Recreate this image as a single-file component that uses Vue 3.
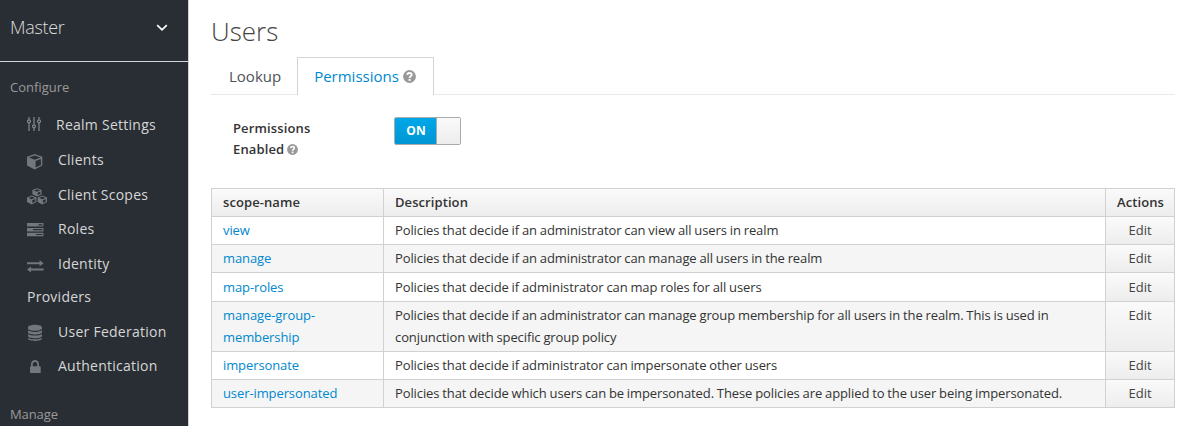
<script setup>
const menu = [
  { label: 'Realm Settings', icon: 'sliders', key: 'settings' },
  { label: 'Clients', icon: 'cube', key: 'clients' },
  { label: 'Client Scopes', icon: 'cubes', key: 'scopes' },
  { label: 'Roles', icon: 'tasks', key: 'roles' },
  { label: 'Identity', more: 'Providers', icon: 'exchange', key: 'identity' },
  { label: 'User Federation', icon: 'database', key: 'federation' },
  { label: 'Authentication', icon: 'lock', key: 'auth' },
]
const rows = [
  { name: ['view'], text: ['Policies that decide if an administrator can view all users in realm'] },
  { name: ['manage'], text: ['Policies that decide if an administrator can manage all users in the realm'] },
  { name: ['map-roles'], text: ['Policies that decide if administrator can map roles for all users'], size: 'tall' },
  {
    name: ['manage-group-', 'membership'],
    text: [
      'Policies that decide if an administrator can manage group membership for all users in the realm. This is used in',
      'conjunction with specific group policy',
    ],
    size: 'double',
  },
  { name: ['impersonate'], text: ['Policies that decide if administrator can impersonate other users'] },
  { name: ['user-impersonated'], text: ['Policies that decide which users can be impersonated. These policies are applied to the user being impersonated.'] },
]
</script>

<template>
  <div class="page">
    <aside class="sidebar">
      <div class="realm">
        <span>Master</span>
        <svg class="chevron" width="12" height="8" viewBox="0 0 12 8"><path d="M1.2 1.2 6 5.9l4.8-4.7" /></svg>
      </div>
      <h2 class="group">Configure</h2>
      <ul class="menu">
        <li v-for="m in menu" :key="m.key" :class="m.key">
          <a class="entry">
            <svg class="icon" width="20" height="19" viewBox="0 0 20 19">
              <g v-if="m.icon === 'sliders'" class="line">
                <path d="M2 1v2.6M2 7v8M7 1v7.6M7 12v3M12 1v2.6M12 7v8" />
                <circle cx="2" cy="5.3" r="1.5" /><circle cx="7" cy="10.3" r="1.5" /><circle cx="12" cy="5.3" r="1.5" />
              </g>
              <path v-else-if="m.icon === 'cube'" fill-rule="evenodd" d="M7.7 1 15.3 3.8V12.6L7.7 16.5 0 12.6V3.8ZM7.7 2.5 2 4.6 7.7 6.8 13.5 4.6ZM8.6 8.1V14.6L13.9 11.9V6.1Z" />
              <g v-else-if="m.icon === 'cubes'" fill-rule="evenodd">
                <path d="M10 .2 14.6 2V6.2L10 8.6 5.4 6.2V2ZM10 1.3 6.9 2.5 10 3.8 13.1 2.5ZM10.6 4.8V7.1L13.4 5.7V3.6Z" />
                <path d="M4.7 7.5 9.4 9.4V14L4.7 16.4 0 14V9.4ZM4.7 8.6 1.6 9.9 4.7 11.2 7.8 9.9ZM5.3 12.2V15L8.2 13.5V11Z" />
                <path d="M15.3 7.5 20 9.4V14L15.3 16.4 10.6 14V9.4ZM15.3 8.6 12.2 9.9 15.3 11.2 18.4 9.9ZM15.9 12.2V15L18.8 13.5V11Z" />
              </g>
              <path v-else-if="m.icon === 'tasks'" fill-rule="evenodd" d="M0 1H16.4V4.6H0ZM11.5 2.2V3.4H15.3V2.2ZM0 6H16.4V9.4H0ZM6 7.1V8.2H15.3V7.1ZM0 10.8H16.4V14.2H0ZM9 11.9V13.1H15.3V11.9Z" />
              <path v-else-if="m.icon === 'exchange'" d="M0 4.3H12.6V2.3L16.6 5.3 12.6 8.3V6.3H0ZM16.6 10.5H4V8.5L0 11.5 4 14.5V12.5H16.6Z" />
              <g v-else-if="m.icon === 'database'">
                <path d="M1 3.4C1 -.2 15 -.2 15 3.4V4.5C15 7.5 1 7.5 1 4.5Z" />
                <path d="M1 6.3C3.5 8.4 12.5 8.4 15 6.3V8.2C15 11.2 1 11.2 1 8.2Z" />
                <path d="M1 10C3.5 12.1 12.5 12.1 15 10V11.9C15 14.9 1 14.9 1 11.9Z" />
                <path d="M1 13.7C3.5 15.8 12.5 15.8 15 13.7V14.6C15 17.8 1 17.8 1 14.6Z" />
              </g>
              <path v-else fill-rule="evenodd" d="M4 7.2V5.2C4 -.3 12 -.3 12 5.2V7.2H12.4Q13.7 7.2 13.7 8V14H3V8Q3 7.2 4 7.2ZM5.8 7.2H10.2V5.3C10.2 2.2 5.8 2.2 5.8 5.3Z" />
            </svg>
            <span class="label">{{ m.label }}</span>
          </a>
          <div v-if="m.more" class="more">{{ m.more }}</div>
        </li>
      </ul>
      <h2 class="group manage">Manage</h2>
    </aside>

    <main class="content">
      <h1>Users</h1>
      <nav class="tabs">
        <a class="tab">Lookup</a>
        <a class="tab active">
          <span>Permissions</span>
          <svg class="help" width="13" height="13" viewBox="0 0 13 13"><circle cx="6.5" cy="6.5" r="6.4" /><path d="M4.3 4.9C4.4 2.5 8.6 2.3 8.7 4.8 8.7 6.4 6.6 6.3 6.6 8" /><rect x="5.6" y="9" width="2" height="1.9" /></svg>
        </a>
      </nav>
      <div class="field">
        <label>Permissions<br><span class="second">Enabled <svg class="help" width="11" height="11" viewBox="0 0 13 13"><circle cx="6.5" cy="6.5" r="6.4" /><path d="M4.3 4.9C4.4 2.5 8.6 2.3 8.7 4.8 8.7 6.4 6.6 6.3 6.6 8" /><rect x="5.6" y="9" width="2" height="1.9" /></svg></span></label>
        <div class="switch"><span class="on">ON</span><span class="knob"></span></div>
      </div>
      <table>
        <colgroup><col class="c1"><col class="c2"><col class="c3"></colgroup>
        <thead>
          <tr><th>scope-name</th><th>Description</th><th>Actions</th></tr>
        </thead>
        <tbody>
          <tr v-for="r in rows" :key="r.name[0]" :class="r.size">
            <td><a><div v-for="n in r.name" :key="n">{{ n }}</div></a></td>
            <td><div v-for="t in r.text" :key="t">{{ t }}</div></td>
            <td class="edit">Edit</td>
          </tr>
        </tbody>
      </table>
    </main>
  </div>
</template>

<style>
body { margin: 0; background: #fff; overflow: hidden; }
</style>

<style scoped>
.page {
  display: flex;
  height: 426px;
  overflow: hidden;
  font-family: "Open Sans", sans-serif;
  font-size: 13px;
  color: #333;
}
.sidebar {
  box-sizing: border-box;
  width: 189px;
  flex: none;
  background: #292e34;
  border-right: 1px solid #d0d0d0;
}
.realm {
  box-sizing: border-box;
  height: 62px;
  padding: 0 20px 6px 10px;
  border-bottom: 1px solid #d5d5d5;
  display: flex;
  align-items: center;
  justify-content: space-between;
  font-family: "Open Sans Light", "Open Sans", sans-serif;
  font-size: 18px;
  font-weight: 300;
  letter-spacing: -.3px;
  color: #dcdcdc;
}
.realm span { position: relative; top: -1px; }
.chevron path { fill: none; stroke: #fff; stroke-width: 1.7; }
.group {
  margin: 0 0 0 10px;
  height: 46px;
  line-height: 51px;
  font-size: 13px;
  font-weight: 400;
  color: #999;
}
.manage { height: auto; line-height: 20px; margin-top: 20px; letter-spacing: -.1px; }
.menu { list-style: none; margin: 0; padding: 0 0 0 27px; font-size: 14px; letter-spacing: .26px; color: #d6d6d6; }
.entry { display: flex; align-items: center; gap: 11px; height: 35px; white-space: nowrap; }
.label { padding-bottom: 2px; }
.icon { flex: none; fill: #72767f; position: relative; top: 2px; }
.line { fill: none; stroke: #85888c; stroke-width: 1.2; }
.settings .entry { gap: 9px; }
.settings .icon { top: 0; }
.roles .entry { height: 33px; }
.identity .entry { height: 36px; }
.identity .icon { top: 3px; }
.federation .icon { top: 1px; }
.auth .entry { height: 34px; }
.auth .label { padding-bottom: 4px; }
.auth .icon { top: 1px; }
.more { height: 33px; line-height: 29px; }
.content { flex: 1; padding: 0 6px 0 22px; }
h1 {
  margin: 0;
  height: 57px;
  line-height: 63px;
  font-family: "Open Sans Light", "Open Sans", sans-serif;
  font-size: 26px;
  font-weight: 300;
  color: #444;
}
.tabs {
  box-sizing: border-box;
  display: flex;
  height: 38px;
  border-bottom: 1px solid #e9e9e9;
  font-size: 15px;
  color: #4d5258;
}
.tab {
  box-sizing: border-box;
  height: 38px;
  padding: 0 16px 0 18px;
  line-height: 39px;
}
.active {
  display: flex;
  align-items: center;
  gap: 4px;
  width: 137px;
  padding: 0 0 0 16px;
  background: #fff;
  border: 1px solid #d4d4d4;
  border-bottom: 0;
  border-radius: 1px 1px 0 0;
  color: #0088ce;
}
.help { fill: #999; flex: none; }
.help path { fill: none; stroke: #fff; stroke-width: 1.8; }
.help rect { fill: #fff; }
.field { display: flex; height: 93px; }
label { width: 161px; padding: 23px 0 0 22px; line-height: 21px; font-weight: 600; letter-spacing: .13px; }
.second { word-spacing: -.9px; }
.second .help { vertical-align: -1px; }
.switch {
  box-sizing: border-box;
  display: flex;
  width: 67px;
  height: 28px;
  margin-top: 22px;
  border: 1px solid #aaa;
  border-radius: 2px;
  overflow: hidden;
}
.on {
  width: 41px;
  background: linear-gradient(#00a8e9, #0095d3);
  color: #fff;
  font-size: 12px;
  font-weight: 700;
  line-height: 26px;
  text-align: center;
  padding-left: 1px;
  box-sizing: border-box;
}
.knob { flex: 1; border-left: 1px solid #aaa; background: linear-gradient(#fafafa, #ededed); }
table {
  width: 964px;
  table-layout: fixed;
  border-spacing: 0;
  border-right: 1px solid #d1d1d1;
  border-bottom: 1px solid #d1d1d1;
  box-sizing: border-box;
}
.c1 { width: 172px; }
.c2 { width: 722px; }
.c3 { width: 69px; }
th, td {
  box-sizing: border-box;
  height: 28px;
  padding: 2px 0 0 11px;
  border-top: 1px solid #d1d1d1;
  border-left: 1px solid #d1d1d1;
  line-height: 22px;
  text-align: left;
  vertical-align: top;
  white-space: nowrap;
}
th { font-weight: 600; letter-spacing: .08px; background: linear-gradient(#fafafa, #ededed); }
td { letter-spacing: -.1px; word-spacing: -.38px; }
tbody tr:nth-child(even) td { background: #f5f5f5; }
.tall td { height: 29px; padding-top: 3px; }
.double td { height: 50px; }
td a { color: #0088ce; }
tbody tr td.edit { padding-left: 0; text-align: center; letter-spacing: 0; background: linear-gradient(#fafafa, #ededed); color: #444; }
</style>
